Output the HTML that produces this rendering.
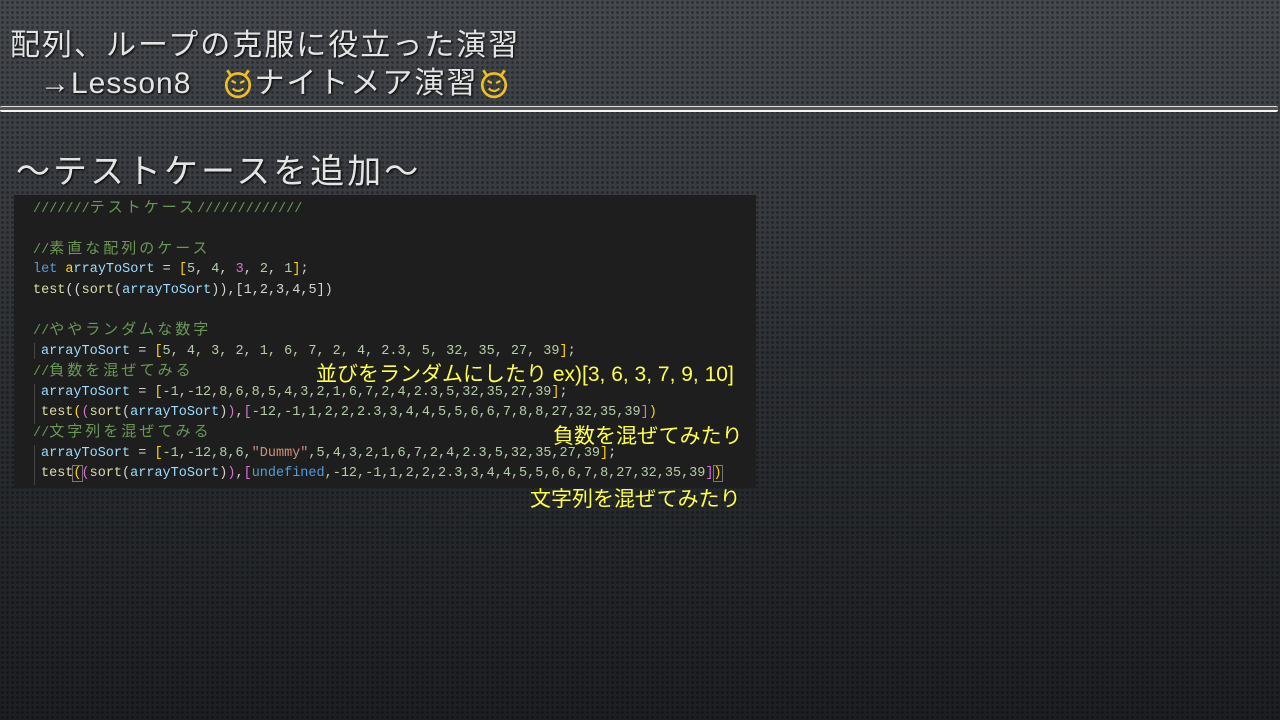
<!DOCTYPE html>
<html><head><meta charset="utf-8"><style>
*{margin:0;padding:0}
body{width:1280px;height:720px;overflow:hidden;position:relative;
background:radial-gradient(circle,rgba(0,0,0,.35) 1.2px,transparent 1.6px) 0 0/5px 5px,linear-gradient(#45484d,#2c2f33 50%,#1c1e21);
font-family:"Liberation Sans","Noto Sans CJK JP",sans-serif;}
.t{position:absolute;color:#e4e4e4;white-space:nowrap;text-shadow:1px 1px 2px #000}
.line{position:absolute;left:0;width:1278px;top:106px;height:3px;border-top:1px solid #ddd;border-bottom:2px solid #f4f4f4;background:#555;border-radius:2px}
.code{position:absolute;left:14px;top:195px;width:742px;height:293px;background:#1e1e1e}
.c{position:absolute;font-family:"Liberation Mono","Noto Sans CJK JP",monospace;font-size:13.5px;white-space:pre;color:#d4d4d4;line-height:16px}
.j{font-size:15px;letter-spacing:3px}
.g{color:#6a9955}.b{color:#569cd6}.v{color:#9cdcfe}.y{color:#ffd700}.p{color:#da70d6}.n{color:#b5cea8}.s{color:#ce9178}.f{color:#dcdcaa}
.a{position:absolute;color:#ffff4a;font-size:21px;white-space:nowrap;font-family:"Liberation Sans","Noto Sans CJK JP",sans-serif}
.bar{position:absolute;left:34px;width:1px;background:#444}
.em{display:inline-block;vertical-align:-6px;width:32px;height:32px}
</style></head><body>
<div class="t" style="left:10px;top:20px;font-size:30px;letter-spacing:2px">配列、ループの克服に役立った演習</div>
<div class="t" style="left:40px;top:58px;font-size:30px;letter-spacing:1px">→Lesson8　<svg class="em" viewBox="0 0 30 30"><path d="M5 3 L9 9 M25 3 L21 9" stroke="#f0c020" stroke-width="2.5" fill="none"/><circle cx="15" cy="17" r="11" fill="none" stroke="#f0c020" stroke-width="2.5"/><path d="M9 13l4 2M21 13l-4 2M10 20q5 5 10 0" stroke="#f0c020" stroke-width="2" fill="none"/></svg><span style="letter-spacing:2px">ナイトメア演習</span><svg class="em" viewBox="0 0 30 30"><path d="M5 3 L9 9 M25 3 L21 9" stroke="#f0c020" stroke-width="2.5" fill="none"/><circle cx="15" cy="17" r="11" fill="none" stroke="#f0c020" stroke-width="2.5"/><path d="M9 13l4 2M21 13l-4 2M10 20q5 5 10 0" stroke="#f0c020" stroke-width="2" fill="none"/></svg></div>
<div class="line"></div>
<div class="t" style="left:16px;top:144px;font-size:34px;letter-spacing:3px">～テストケースを追加～</div>
<div class="code"></div>
<div class="bar" style="top:343px;height:16px"></div>
<div class="bar" style="top:384px;height:40px"></div>
<div class="bar" style="top:445px;height:40px"></div>
<div class="c g" style="left:33px;top:201px">///////<span class="j">テストケース</span>/////////////</div>
<div class="c g" style="left:33px;top:242px">//<span class="j">素直な配列のケース</span></div>
<div class="c" style="left:33px;top:262px"><span class="b">let</span> <span class="v"><span class="y">a</span>rrayToSort</span> = <span class="y">[</span><span class="n">5</span>, <span class="n">4</span>, <span class="p">3</span>, <span class="n">2</span>, <span class="n">1</span><span class="y">]</span>;</div>
<div class="c" style="left:33px;top:283px"><span class="f">test</span>((<span class="f">sort</span>(<span class="v">arrayToSort</span>)),[1,2,3,4,5])</div>
<div class="c g" style="left:33px;top:323px">//<span class="j">ややランダムな数字</span></div>
<div class="c" style="left:41px;top:344px"><span class="v">arrayToSort</span> = <span class="y">[</span><span class="n">5, 4, 3, 2, 1, 6, 7, 2, 4, 2.3, 5, 32, 35, 27, 39</span><span class="y">]</span>;</div>
<div class="c g" style="left:33px;top:364px">//<span class="j">負数を混ぜてみる</span></div>
<div class="c" style="left:41px;top:385px"><span class="v">arrayToSort</span> = <span class="y">[</span><span class="n">-1,-12,8,6,8,5,4,3,2,1,6,7,2,4,2.3,5,32,35,27,39</span><span class="y">]</span>;</div>
<div class="c" style="left:41px;top:405px"><span class="f">test</span><span class="y">(</span><span class="p">(</span><span class="f">sort</span>(<span class="v">arrayToSort</span>)<span class="p">)</span>,<span class="p">[</span><span class="n">-12,-1,1,2,2,2.3,3,4,4,5,5,6,6,7,8,8,27,32,35,39</span><span class="p">]</span><span class="y">)</span></div>
<div class="c g" style="left:33px;top:425px">//<span class="j">文字列を混ぜてみる</span></div>
<div class="c" style="left:41px;top:446px"><span class="v">arrayToSort</span> = <span class="y">[</span><span class="n">-1,-12,8,6,</span><span class="s">"Dummy"</span><span class="n">,5,4,3,2,1,6,7,2,4,2.3,5,32,35,27,39</span><span class="y">]</span>;</div>
<div class="c" style="left:41px;top:466px"><span class="f">test</span><span class="y" style="outline:1px solid #777">(</span><span class="p">(</span><span class="f">sort</span>(<span class="v">arrayToSort</span>)<span class="p">)</span>,<span class="p">[</span><span class="b">undefined</span><span class="n">,-12,-1,1,2,2,2.3,3,4,4,5,5,6,6,7,8,27,32,35,39</span><span class="p">]</span><span class="y" style="outline:1px solid #777">)</span></div>
<div class="a" style="left:316px;top:358px">並びをランダムにしたり ex)[3, 6, 3, 7, 9, 10]</div>
<div class="a" style="left:553px;top:420px">負数を混ぜてみたり</div>
<div class="a" style="left:530px;top:483px">文字列を混ぜてみたり</div>
</body></html>
